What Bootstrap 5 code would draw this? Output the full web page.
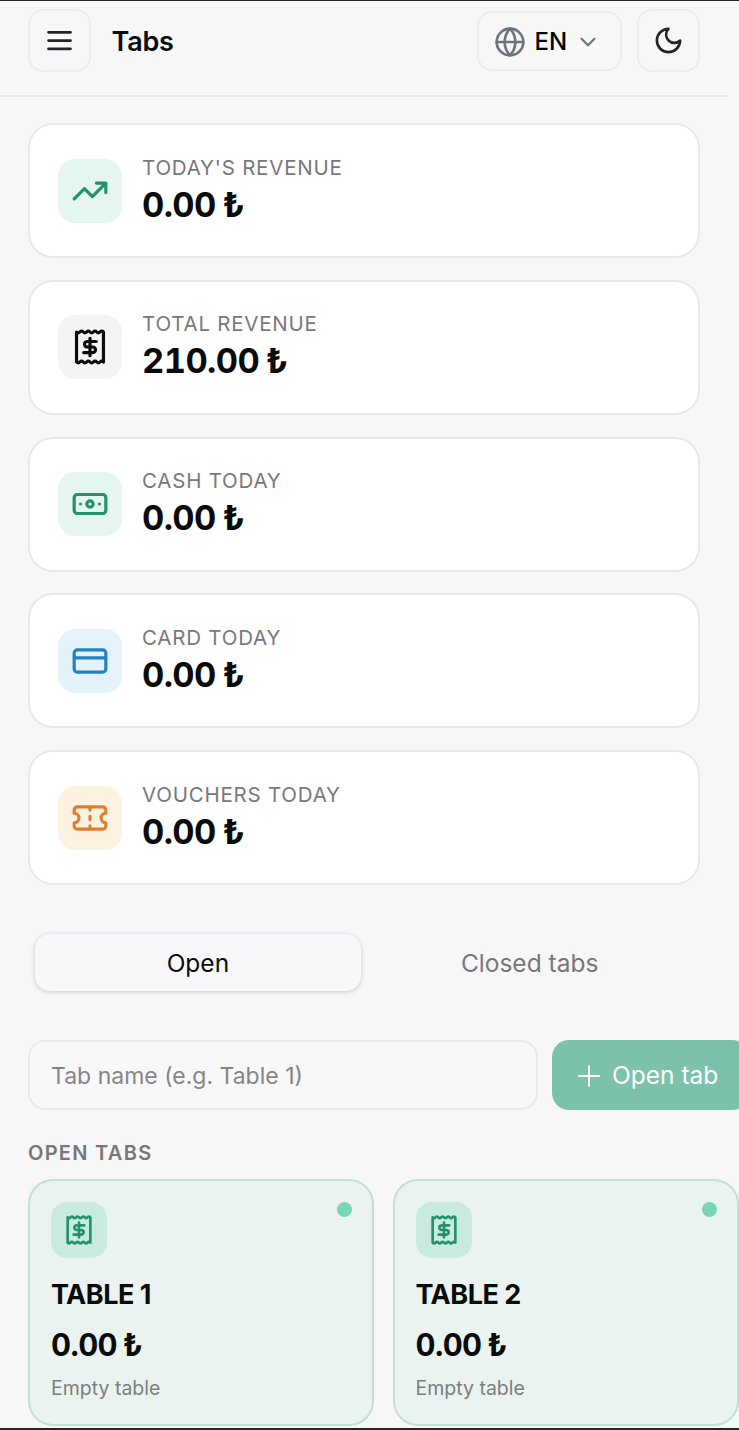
<!DOCTYPE html>
<html lang="en">
<head>
  <meta charset="UTF-8">
  <meta name="viewport" content="width=device-width, initial-scale=1.0">
  <title>Tabs</title>
  <link href="https://cdn.jsdelivr.net/npm/bootstrap@5.3.0/dist/css/bootstrap.min.css" rel="stylesheet">
  <style>
    body {
      background: #f7f7f8;
      font-family: Inter, "Noto Sans", sans-serif;
      color: #0b0b0c;
    }
    .app-frame {
      height: 1430px;
      overflow: hidden;
      border-top: 1px solid #262626;
      border-bottom: 2px solid #262626;
    }
    .app-head {
      height: 96px;
      margin-right: 11px;
      padding: 8px 28.5px 0 28px;
      border-bottom: 2px solid #e9e9eb;
    }
    .head-btn {
      width: 62.5px;
      height: 63px;
      border: 2px solid #ececee;
      border-radius: 15px;
      background: #f7f7f8;
    }
    .head-title {
      font-size: 27px;
      line-height: 42px;
      font-weight: 600;
      margin: 12px 0 0 21px;
      letter-spacing: -.2px;
    }
    .lang-btn {
      width: 145.5px;
      height: 60px;
      padding: 1px 3px 0 0;
      border: 2px solid #ececee;
      border-radius: 15px;
      background: #f7f7f8;
      font-size: 24px;
      font-weight: 500;
      margin: 2px 15px 0 0;
    }
    .stats-list {
      padding: 26px 39.5px 0 28px;
      gap: 21.75px;
    }
    .stat-box {
      height: 135px;
      padding: 0 28px;
      background: #fff;
      border: 2px solid #e8e8ea;
      border-radius: 25px;
      gap: 20px;
    }
    .stat-text { padding-top: 2px; }
    .ico-box {
      width: 64px;
      height: 64px;
      border-radius: 17px;
      flex-shrink: 0;
    }
    .ico-green { background: #e5f5ef; color: #23916a; }
    .ico-gray { background: #f4f4f5; color: #0b0b0c; }
    .ico-blue { background: #e4f2fc; color: #2181c4; }
    .ico-orange { background: #fdf1e2; color: #dd7f2c; }
    .stat-label {
      font-size: 20.5px;
      line-height: 22px;
      letter-spacing: .77px;
      color: #78787b;
    }
    .stat-value {
      margin-top: 4px;
      font-size: 34.5px;
      line-height: 44px;
      font-weight: 700;
      letter-spacing: -.6px;
      font-variant-numeric: tabular-nums;
    }
    .lira-sign { margin-left: -2px; }
    .tab-switch {
      margin: 43px 39.5px 0 28px;
      padding: 6px 7px;
      height: 70px;
      gap: 6px;
      background: #f7f7f8;
      border-radius: 16px;
    }
    .tab-pill {
      flex: 1 1 0;
      height: 57px;
      padding-top: 2px;
      border: 0;
      border-radius: 15px;
      background: transparent;
      font-size: 24.5px;
      color: #77777a;
    }
    .tab-pill.on {
      background: #f8f8fa;
      color: #0b0b0c;
      box-shadow: 0 1px 5px rgba(0, 0, 0, .2);
    }
    .add-row {
      margin: 42px 0 0 28px;
      gap: 14px;
      width: 720px;
    }
    .name-input {
      width: 510px;
      height: 70px;
      padding: 1px 21px 0;
      flex-shrink: 0;
      border: 2px solid #e9e9eb;
      border-radius: 17px;
      background: #f8f8f9;
      font-size: 23px;
    }
    .name-input::placeholder { color: #858588; opacity: 1; }
    .add-btn {
      width: 197px;
      height: 70px;
      flex-shrink: 0;
      padding: 1px 0 0 25px;
      border: 0;
      border-radius: 17px;
      background: #7cc2aa;
      color: #fff;
      font-size: 24.5px;
      gap: 11px;
    }
    .sect-label {
      margin: 30px 0 0 28px;
      font-size: 20px;
      line-height: 26px;
      font-weight: 600;
      letter-spacing: 1.3px;
      color: #77777a;
    }
    .tab-grid {
      display: grid;
      grid-template-columns: 346px 346px;
      gap: 18.5px;
      margin: 13px 0 0 28px;
    }
    .tab-tile {
      position: relative;
      height: 247px;
      padding: 21px 21px 0;
      background: #eaf3f0;
      border: 2px solid #bfe0d4;
      border-radius: 25px;
    }
    .tile-ico {
      width: 56px;
      height: 56px;
      border-radius: 16px;
      background: #c9eadf;
      color: #23916a;
    }
    .live-dot {
      position: absolute;
      top: 21px;
      right: 20px;
      width: 15px;
      height: 15px;
      border-radius: 50%;
      background: #76d6b5;
    }
    .tile-name {
      margin-top: 18px;
      font-size: 27px;
      line-height: 38px;
      font-weight: 700;
      letter-spacing: -.5px;
    }
    .tile-total {
      margin-top: 11px;
      font-size: 31px;
      line-height: 40px;
      font-weight: 700;
      letter-spacing: -.6px;
      font-variant-numeric: tabular-nums;
    }
    .tile-note {
      margin-top: 10px;
      font-size: 19.5px;
      line-height: 26px;
      color: #7b7f7e;
    }
    svg {
      fill: none;
      stroke: currentColor;
      stroke-width: 2;
      stroke-linecap: round;
      stroke-linejoin: round;
      flex-shrink: 0;
    }
  </style>
</head>
<body>
  <svg width="0" height="0" class="position-absolute">
    <symbol id="i-receipt" viewBox="0 0 24 24">
      <path d="M3.5 2.5q1.060 1.200 2.125 0t2.125 0 2.125 0 2.125 0 2.125 0 2.125 0 2.125 0 2.125 0v19q-1.060-1.200-2.125 0t-2.125 0-2.125 0-2.125 0-2.125 0-2.125 0-2.125 0-2.125 0z"/>
      <path d="M16 8.5h-5.500a2 1.750 0 0 0 0 3.500h3a2 1.750 0 0 1 0 3.500H8M12 6.500v11"/>
    </symbol>
  </svg>

  <div class="app-frame">
    <header class="app-head d-flex align-items-start">
      <button class="head-btn d-flex align-items-center justify-content-center p-0 text-dark" type="button" aria-label="Menu">
        <svg width="33" height="33" viewBox="0 0 24 24"><path d="M4 6h16M4 12h16M4 18h16"/></svg>
      </button>
      <div class="head-title">Tabs</div>
      <button class="lang-btn d-flex align-items-center justify-content-center gap-2 ms-auto" type="button">
        <svg width="32" height="32" viewBox="0 0 24 24" class="text-secondary"><circle cx="12" cy="12" r="10"/><path d="M12 2a14.500 14.500 0 0 0 0 20 14.500 14.500 0 0 0 0-20M2 12h20"/></svg>
        <span>EN</span>
        <svg width="26" height="26" viewBox="0 0 24 24" class="text-secondary"><path d="m6 9 6 6 6-6"/></svg>
      </button>
      <button class="head-btn d-flex align-items-center justify-content-center p-0 text-dark" type="button" aria-label="Theme">
        <svg width="31" height="31" viewBox="0 0 24 24"><path d="M12 3a6 6 0 0 0 9 9 9 9 0 1 1-9-9Z"/></svg>
      </button>
    </header>

    <section class="stats-list d-flex flex-column">
      <div class="stat-box d-flex align-items-center">
        <div class="ico-box ico-green d-flex align-items-center justify-content-center">
          <svg width="38" height="38" viewBox="0 0 24 24"><path d="M22 7l-8.500 8.500-5-5L2 17M16 7h6v6"/></svg>
        </div>
        <div class="stat-text">
          <div class="stat-label">TODAY'S REVENUE</div>
          <div class="stat-value">0.00 <span class="lira-sign">₺</span></div>
        </div>
      </div>
      <div class="stat-box d-flex align-items-center">
        <div class="ico-box ico-gray d-flex align-items-center justify-content-center">
          <svg width="38" height="38"><use href="#i-receipt"/></svg>
        </div>
        <div class="stat-text">
          <div class="stat-label">TOTAL REVENUE</div>
          <div class="stat-value">210.00 <span class="lira-sign">₺</span></div>
        </div>
      </div>
      <div class="stat-box d-flex align-items-center">
        <div class="ico-box ico-green d-flex align-items-center justify-content-center">
          <svg width="38" height="38" viewBox="0 0 24 24"><rect x="2" y="6" width="20" height="12" rx="2"/><circle cx="12" cy="12" r="2"/><path d="M6 12h.01M18 12h.01"/></svg>
        </div>
        <div class="stat-text">
          <div class="stat-label">CASH TODAY</div>
          <div class="stat-value">0.00 <span class="lira-sign">₺</span></div>
        </div>
      </div>
      <div class="stat-box d-flex align-items-center">
        <div class="ico-box ico-blue d-flex align-items-center justify-content-center">
          <svg width="38" height="38" viewBox="0 0 24 24"><rect x="2" y="5" width="20" height="14" rx="2"/><path d="M2 10h20"/></svg>
        </div>
        <div class="stat-text">
          <div class="stat-label">CARD TODAY</div>
          <div class="stat-value">0.00 <span class="lira-sign">₺</span></div>
        </div>
      </div>
      <div class="stat-box d-flex align-items-center">
        <div class="ico-box ico-orange d-flex align-items-center justify-content-center">
          <svg width="38" height="38" viewBox="0 0 24 24"><path d="M2 9a3 3 0 0 1 0 6v2a2 2 0 0 0 2 2h16a2 2 0 0 0 2-2v-2a3 3 0 0 1 0-6V7a2 2 0 0 0-2-2H4a2 2 0 0 0-2 2ZM12 5v2M12 11v2M12 17v2"/></svg>
        </div>
        <div class="stat-text">
          <div class="stat-label">VOUCHERS TODAY</div>
          <div class="stat-value">0.00 <span class="lira-sign">₺</span></div>
        </div>
      </div>
    </section>

    <div class="tab-switch d-flex">
      <button class="tab-pill on" type="button">Open</button>
      <button class="tab-pill" type="button">Closed tabs</button>
    </div>

    <div class="add-row d-flex">
      <input class="name-input" type="text" placeholder="Tab name (e.g. Table 1)">
      <button class="add-btn d-flex align-items-center" type="button">
        <svg width="24" height="24" viewBox="0 0 24 24"><path d="M2 12h20M12 2v20"/></svg>
        <span>Open tab</span>
      </button>
    </div>

    <div class="sect-label">OPEN TABS</div>

    <div class="tab-grid">
      <div class="tab-tile">
        <span class="live-dot"></span>
        <div class="tile-ico d-flex align-items-center justify-content-center">
          <svg width="32" height="32"><use href="#i-receipt"/></svg>
        </div>
        <div class="tile-name">TABLE 1</div>
        <div class="tile-total">0.00 <span class="lira-sign">₺</span></div>
        <div class="tile-note">Empty table</div>
      </div>
      <div class="tab-tile">
        <span class="live-dot"></span>
        <div class="tile-ico d-flex align-items-center justify-content-center">
          <svg width="32" height="32"><use href="#i-receipt"/></svg>
        </div>
        <div class="tile-name">TABLE 2</div>
        <div class="tile-total">0.00 <span class="lira-sign">₺</span></div>
        <div class="tile-note">Empty table</div>
      </div>
    </div>
  </div>

  <script src="https://cdn.jsdelivr.net/npm/bootstrap@5.3.0/dist/js/bootstrap.bundle.min.js"></script>
</body>
</html>
